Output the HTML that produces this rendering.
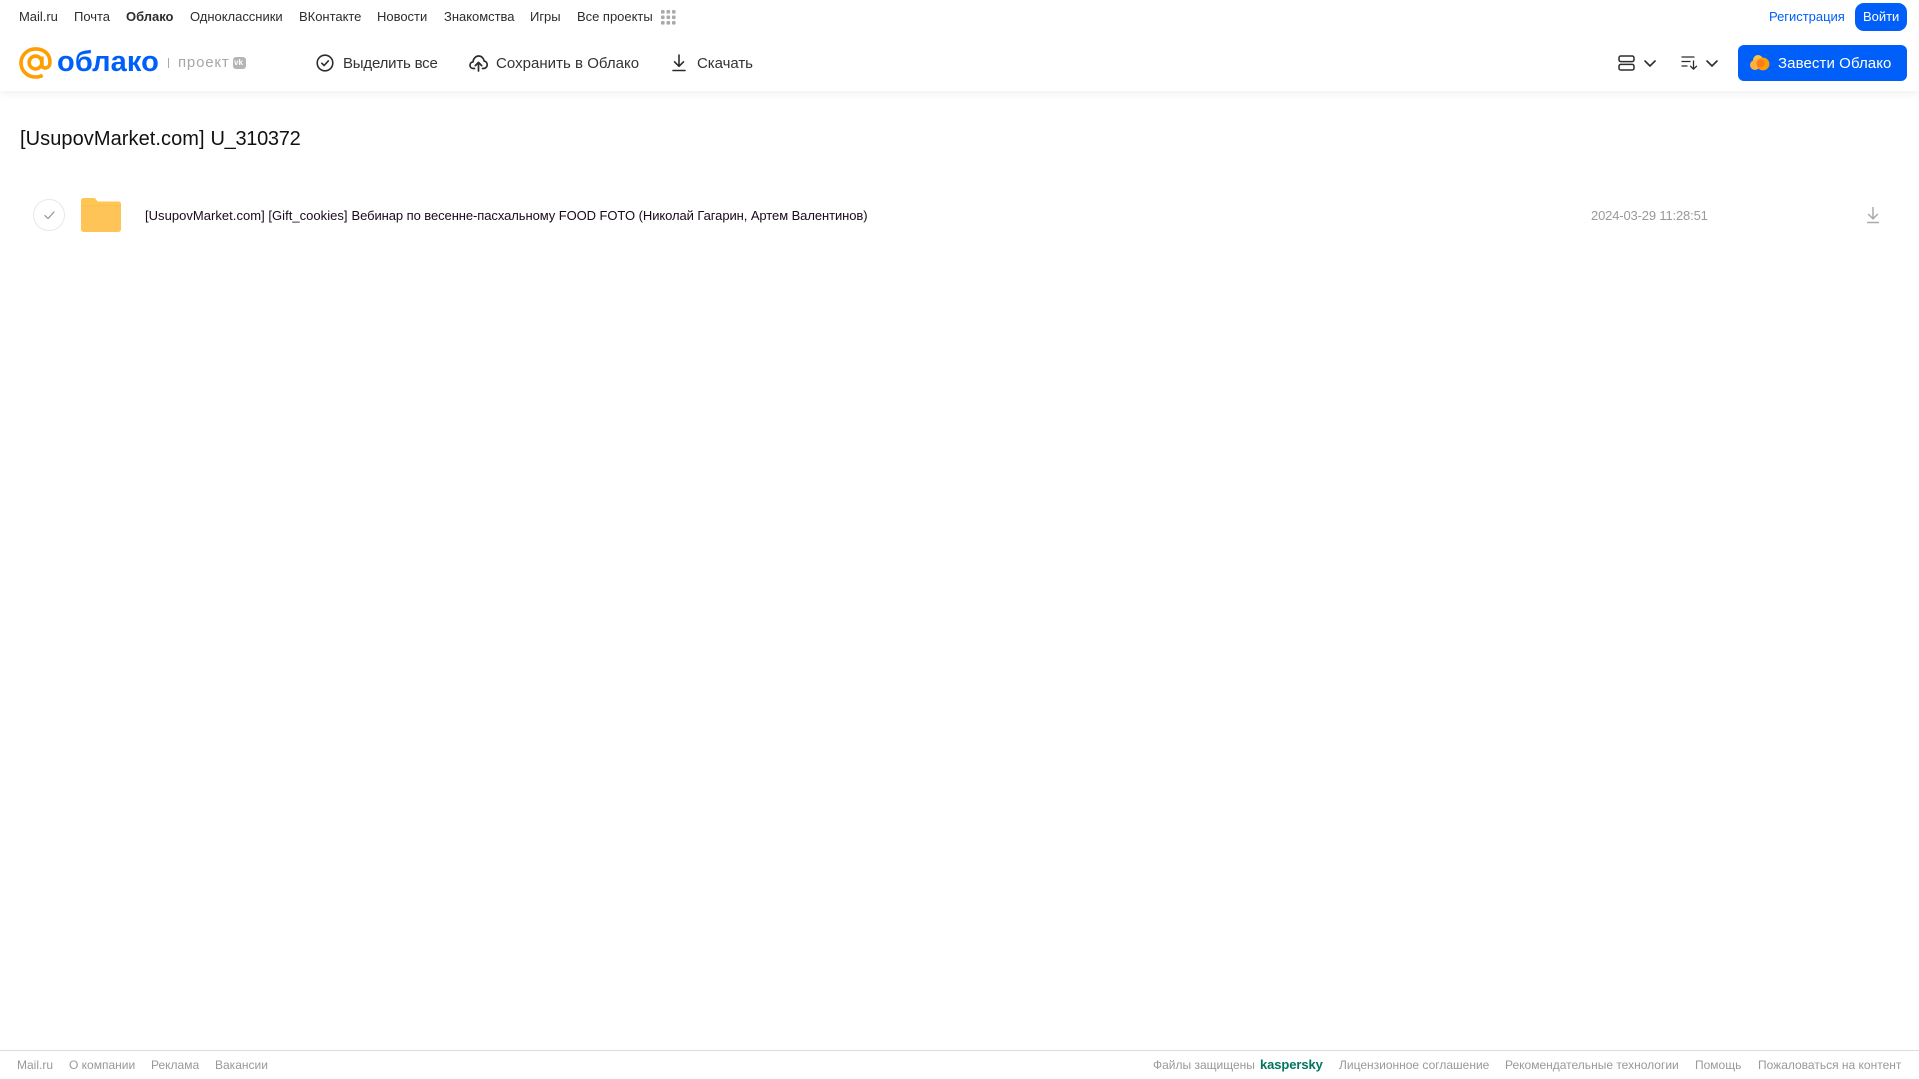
<!DOCTYPE html>
<html lang="ru"><head><meta charset="utf-8"><title>Облако</title>
<style>
html,body{margin:0;padding:0;background:#fff}
body{position:relative;width:1919px;height:1079px;overflow:hidden;font-family:"Liberation Sans",sans-serif}
.t{position:absolute;white-space:nowrap;line-height:20px;height:20px}
.n{top:7px;font-size:13px;color:#2c2d2e;letter-spacing:-.02px}
.b{top:54px;font-size:15px;color:#333}
.f{top:1055px;font-size:12px;color:#999}
svg{position:absolute;overflow:visible}
#hd{position:absolute;left:0;top:0;width:1919px;height:91px;background:#fff;box-shadow:0 2px 8px rgba(0,0,0,.07)}
.btn{position:absolute;background:#005ff9}
</style></head><body>
<div id="hd"></div>
<span class="t n" style="left:19px">Mail.ru</span>
<span class="t n" style="left:74px">Почта</span>
<span class="t n" style="left:126px;font-weight:700">Облако</span>
<span class="t n" style="left:190px">Одноклассники</span>
<span class="t n" style="left:299px">ВКонтакте</span>
<span class="t n" style="left:377px">Новости</span>
<span class="t n" style="left:444px">Знакомства</span>
<span class="t n" style="left:530px">Игры</span>
<span class="t n" style="left:577px">Все проекты</span>
<svg style="left:661px;top:10px" width="15" height="15" fill="#aaa"><rect x="0" y="0" width="3.6" height="3.6" rx="1"/><rect x="5.5" y="0" width="3.6" height="3.6" rx="1"/><rect x="11" y="0" width="3.6" height="3.6" rx="1"/><rect x="0" y="5.5" width="3.6" height="3.6" rx="1"/><rect x="5.5" y="5.5" width="3.6" height="3.6" rx="1"/><rect x="11" y="5.5" width="3.6" height="3.6" rx="1"/><rect x="0" y="11" width="3.6" height="3.6" rx="1"/><rect x="5.5" y="11" width="3.6" height="3.6" rx="1"/><rect x="11" y="11" width="3.6" height="3.6" rx="1"/></svg>
<span class="t n" style="left:1769px;color:#005ff9">Регистрация</span>
<div class="btn" style="left:1855px;top:3px;width:52px;height:28px;border-radius:9px"></div>
<span class="t n" style="left:1863px;color:#fff">Войти</span>

<svg style="left:19px;top:47px" width="33" height="32" viewBox="0 0 33 32" fill="none" stroke="#ff9e00" stroke-width="3.6"><circle cx="16.5" cy="15.5" r="6.4"/><path d="M22.9 9.5v8.2c0 4.6 7.6 4.6 8-1.6C31.6 7.5 25.4 1.9 16.6 1.9 8.4 1.9 2 8.2 2 16s6.4 14 14.6 14c2.7 0 4.9-.5 7-1.6"/></svg>
<span class="t" style="left:57px;top:44px;height:36px;line-height:36px;font-size:29px;font-weight:700;color:#005ff9;letter-spacing:.1px">облако</span>
<div style="position:absolute;left:168px;top:58px;width:1px;height:10px;background:#aaa"></div>
<span class="t" style="left:178px;top:53px;font-size:15px;color:#a5a7aa;letter-spacing:.8px">проект</span>
<div style="position:absolute;left:233px;top:57px;width:13px;height:12px;border-radius:3px;background:#b3b5b8"></div>
<span class="t" style="left:234px;top:53px;font-size:8px;font-weight:700;color:#fff">vk</span>

<svg style="left:316px;top:54px" width="18" height="18" viewBox="0 0 18 18" fill="none" stroke="#2c2d2e" stroke-width="1.6"><circle cx="9" cy="9" r="7.8"/><path d="M5.8 9.2l2.3 2.3 4.2-4.6" stroke-linecap="round" stroke-linejoin="round"/></svg>
<span class="t b" style="left:343px;letter-spacing:-.2px">Выделить все</span>
<svg style="left:469px;top:54px" width="19" height="18" viewBox="0 0 19 18" fill="none" stroke="#2c2d2e" stroke-width="1.7" stroke-linecap="round" stroke-linejoin="round"><path d="M5.5 14.5H4.5C2.3 14.5 1 13 1 11.2c0-1.8 1.3-3.1 3-3.3C4.3 4.5 6.8 2 9.6 2c2.8 0 5 2.1 5.5 5 1.9.3 3.1 1.9 3.1 3.7 0 2.1-1.5 3.8-3.7 3.8h-1"/><path d="M9.5 17V9M6.3 11.6l3.2-3.2 3.2 3.2"/></svg>
<span class="t b" style="left:496px;letter-spacing:.03px">Сохранить в Облако</span>
<svg style="left:672px;top:54px" width="14" height="18" viewBox="0 0 14 18" fill="none" stroke="#2c2d2e" stroke-width="1.6" stroke-linecap="round" stroke-linejoin="round"><path d="M7 1v11M2.5 7.8L7 12.3l4.5-4.5M1 16.5h12"/></svg>
<span class="t b" style="left:697px;letter-spacing:-.05px">Скачать</span>

<svg style="left:1618px;top:55px" width="17" height="16" viewBox="0 0 17 16" fill="none" stroke="#2c2d2e" stroke-width="1.5"><rect x="1" y="1" width="15" height="5.6" rx="1.8"/><rect x="1" y="9.4" width="15" height="5.6" rx="1.8"/></svg>
<svg style="left:1644px;top:60px" width="12" height="7" viewBox="0 0 12 7" fill="none" stroke="#2c2d2e" stroke-width="1.6" stroke-linecap="round" stroke-linejoin="round"><path d="M1 1l5 5 5-5"/></svg>
<svg style="left:1681px;top:56px" width="17" height="14" viewBox="0 0 17 14" fill="none" stroke="#2c2d2e" stroke-width="1.3" stroke-linecap="round" stroke-linejoin="round"><path d="M1 1h12M1 5.5h8M1 10h5M12.5 5v8M9.5 10.2l3 3 3-3"/></svg>
<svg style="left:1706px;top:60px" width="12" height="7" viewBox="0 0 12 7" fill="none" stroke="#2c2d2e" stroke-width="1.6" stroke-linecap="round" stroke-linejoin="round"><path d="M1 1l5 5 5-5"/></svg>
<div class="btn" style="left:1738px;top:45px;width:169px;height:36px;border-radius:6px"></div>
<svg style="left:1750px;top:54px" width="20" height="17" viewBox="0 0 20 17"><circle cx="8" cy="6" r="5" fill="#ffc04d"/><circle cx="5" cy="11" r="5" fill="#ffb13d"/><circle cx="13" cy="10" r="6.4" fill="#ff9e00"/><circle cx="10.5" cy="9.5" r="4" fill="#ff7a1a"/></svg>
<span class="t" style="left:1778px;top:54px;font-size:15px;color:#fff;letter-spacing:.09px">Завести Облако</span>

<span class="t" style="left:20px;top:125px;height:28px;line-height:28px;font-size:20px;color:#111;letter-spacing:.07px">[UsupovMarket.com]</span>
<span class="t" style="left:210.5px;top:125px;height:28px;line-height:28px;font-size:20px;color:#111;letter-spacing:-.3px">U_310372</span>

<div style="position:absolute;left:33px;top:199px;width:30px;height:30px;border:1px solid #e7e8ea;border-radius:50%"></div>
<svg style="left:44px;top:211px" width="11" height="9" viewBox="0 0 11 9" fill="none" stroke="#999" stroke-width="1.3" stroke-linecap="round" stroke-linejoin="round"><path d="M1 4.6l3 3L10 1"/></svg>
<svg style="left:81px;top:198px" width="40" height="34" viewBox="0 0 40 34"><path d="M0 2.5A2.5 2.5 0 0 1 2.500 0h10c1.500 0 2.500 1 3 2 .4.800 1 1.500 2 1.500h20a2.500 2.500 0 0 1 2.500 2.500V31a3 3 0 0 1-3 3H3a3 3 0 0 1-3-3z" fill="#ffc654"/><path d="M0 8h40V31a3 3 0 0 1-3 3H3a3 3 0 0 1-3-3z" fill="#ffc457"/><path d="M0 7.500h40" stroke="#fbbd4e" stroke-width="1"/></svg>
<span class="t" style="left:145px;top:206px;font-size:13px;color:#1a0a1a;letter-spacing:.03px">[UsupovMarket.com] [Gift_cookies]</span>
<span class="t" style="left:351.5px;top:206px;font-size:13px;color:#1a0a1a;letter-spacing:-.075px">Вебинар по весенне-пасхальному FOOD FOTO (Николай Гагарин, Артем Валентинов)</span>
<span class="t" style="left:1591px;top:206px;font-size:13px;color:#999;letter-spacing:-.16px">2024-03-29 11:28:51</span>
<svg style="left:1866px;top:206px" width="14" height="18" viewBox="0 0 14 18" fill="none" stroke="#aaa" stroke-width="1.5"><path d="M7 1v11.500M2.200 8L7 12.800 11.800 8M1 16.500h12"/></svg>

<div style="position:absolute;left:0;top:1050px;width:1919px;height:1px;background:#dcdcdc"></div>
<span class="t f" style="left:17px">Mail.ru</span>
<span class="t f" style="left:69px">О компании</span>
<span class="t f" style="left:151px">Реклама</span>
<span class="t f" style="left:215px">Вакансии</span>
<span class="t f" style="left:1153px">Файлы защищены</span>
<span class="t f" style="left:1260px;font-size:13px;font-weight:700;color:#00755f;letter-spacing:-.1px">kaspersky</span>
<span class="t f" style="left:1339px">Лицензионное соглашение</span>
<span class="t f" style="left:1505px">Рекомендательные технологии</span>
<span class="t f" style="left:1695px">Помощь</span>
<span class="t f" style="left:1758px">Пожаловаться на контент</span>
</body></html>
